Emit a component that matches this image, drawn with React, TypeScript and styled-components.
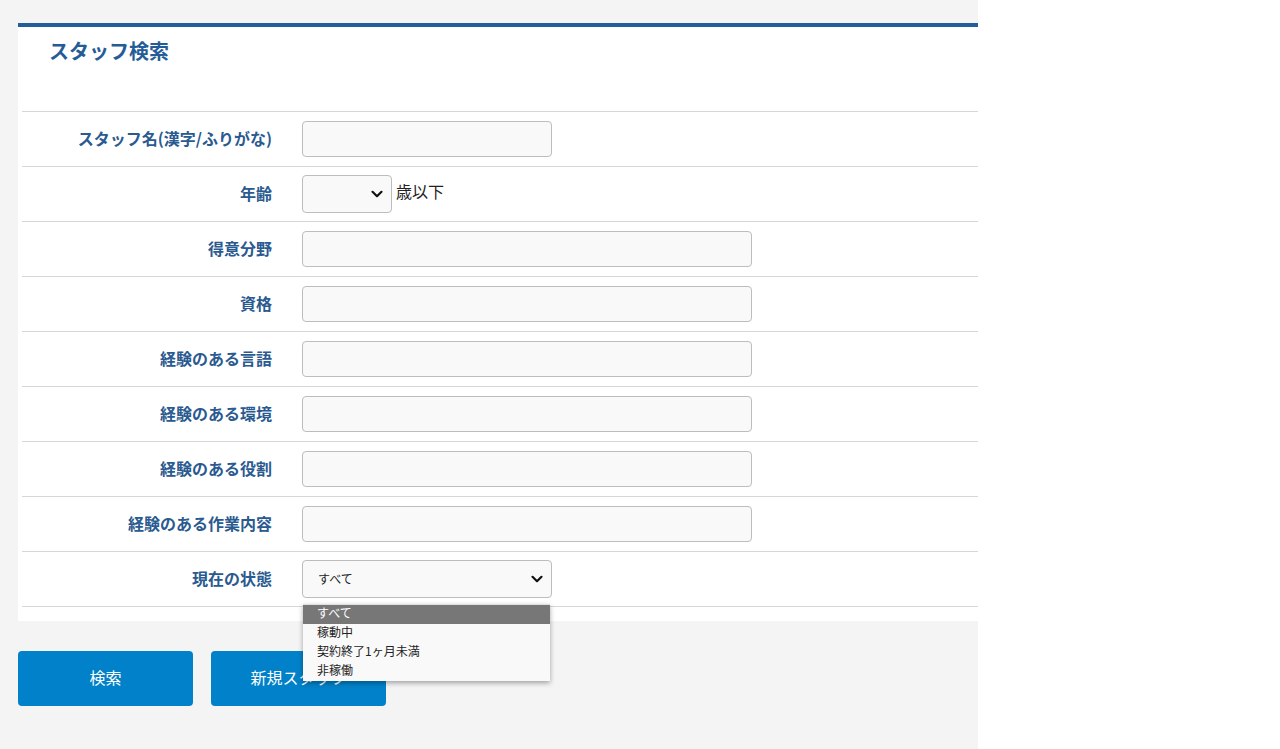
import styled, { createGlobalStyle } from "styled-components";

const GlobalStyle = createGlobalStyle`
  html, body {
    margin: 0;
    padding: 0;
    background: #ffffff;
  }
  body {
    font-family: "Noto Sans CJK JP", "Noto Sans", sans-serif;
    color: #222;
  }
`;

const Page = styled.div`
  width: 978px;
  min-height: 749px;
  background: #f4f4f4;
  padding: 23px 0 0 18px;
  box-sizing: border-box;
`;

const Card = styled.section`
  background: #fff;
  border-top: 4px solid #235d9b;
  padding: 0 0 14px 4px;
`;

const Title = styled.h2`
  margin: 0;
  padding: 9px 0 45px 27px;
  font-size: 20px;
  line-height: 30px;
  font-weight: 700;
  color: #245c98;
`;

const Table = styled.div`
  border-top: 1px solid #d6d6d6;
`;

const Row = styled.div`
  display: grid;
  grid-template-columns: 280px 1fr;
  align-items: center;
  height: 54px;
  border-bottom: 1px solid #d6d6d6;
`;

const Label = styled.div`
  text-align: right;
  padding: 0 30px 2px 0;
  font-size: 16px;
  line-height: 22px;
  font-weight: 700;
  color: #2a5a8f;
`;

const Field = styled.div`
  display: flex;
  align-items: center;
  gap: 4px;
`;

const TextInput = styled.input<{ $w: number }>`
  width: ${(p) => p.$w}px;
  height: 36px;
  box-sizing: border-box;
  border: 1px solid #bdbdbd;
  border-radius: 4px;
  background: #f9f9f9;
  font-family: inherit;
  font-size: 14px;
  padding: 0 10px;
`;

const SelectWrap = styled.div<{ $w: number }>`
  position: relative;
  width: ${(p) => p.$w}px;
`;

const Select = styled.select`
  width: 100%;
  height: 38px;
  box-sizing: border-box;
  appearance: none;
  border: 1px solid #bdbdbd;
  border-radius: 4px;
  background: #f9f9f9;
  font-family: inherit;
  font-size: 12px;
  color: #222;
  padding: 0 0 2px 15px;
`;

const Chevron = styled.svg`
  position: absolute;
  right: 8px;
  top: 50%;
  transform: translateY(-50%);
  pointer-events: none;
`;

const Suffix = styled.span`
  font-size: 16px;
  line-height: 22px;
  color: #222;
  padding-bottom: 6px;
`;

const Dropdown = styled.ul`
  position: absolute;
  left: 1px;
  top: 44px;
  width: 247px;
  margin: 0;
  padding: 0;
  list-style: none;
  background: #f9f9f9;
  box-shadow: 0 2px 5px rgba(0, 0, 0, 0.35);
  border-top: 1px solid #e0e0e0;
  z-index: 10;
`;

const Option = styled.li<{ $active?: boolean }>`
  height: 19px;
  box-sizing: border-box;
  line-height: 16px;
  padding: 0 0 3px 14px;
  font-size: 12px;
  color: ${(p) => (p.$active ? "#fff" : "#222")};
  background: ${(p) => (p.$active ? "#777777" : "transparent")};
`;

const Actions = styled.div`
  display: flex;
  gap: 18px;
  padding-top: 30px;
`;

const Button = styled.button`
  width: 175px;
  height: 55px;
  border: none;
  border-radius: 4px;
  background: #0081c9;
  color: #fff;
  font-family: inherit;
  font-size: 16px;
  padding: 0 0 4px;
  cursor: pointer;
`;

const ChevronIcon = () => (
  <Chevron width="14" height="14" viewBox="0 0 14 14">
    <path
      d="M2.5 4.8 L7 9.2 L11.5 4.8"
      fill="none"
      stroke="#111"
      strokeWidth="2.2"
      strokeLinecap="round"
      strokeLinejoin="round"
    />
  </Chevron>
);

const textRows = [
  "得意分野",
  "資格",
  "経験のある言語",
  "経験のある環境",
  "経験のある役割",
  "経験のある作業内容",
];

const statusOptions = ["すべて", "稼動中", "契約終了1ヶ月未満", "非稼働"];

export default function App() {
  return (
    <>
      <GlobalStyle />
      <Page>
        <Card>
          <Title>スタッフ検索</Title>
          <Table>
            <Row>
              <Label>スタッフ名(漢字/ふりがな)</Label>
              <Field>
                <TextInput $w={250} />
              </Field>
            </Row>
            <Row>
              <Label>年齢</Label>
              <Field>
                <SelectWrap $w={90}>
                  <Select defaultValue="">
                    <option value=""></option>
                  </Select>
                  <ChevronIcon />
                </SelectWrap>
                <Suffix>歳以下</Suffix>
              </Field>
            </Row>
            {textRows.map((label) => (
              <Row key={label}>
                <Label>{label}</Label>
                <Field>
                  <TextInput $w={450} />
                </Field>
              </Row>
            ))}
            <Row>
              <Label>現在の状態</Label>
              <Field>
                <SelectWrap $w={250}>
                  <Select defaultValue="すべて">
                    {statusOptions.map((o) => (
                      <option key={o}>{o}</option>
                    ))}
                  </Select>
                  <ChevronIcon />
                  <Dropdown>
                    {statusOptions.map((o, i) => (
                      <Option key={o} $active={i === 0}>
                        {o}
                      </Option>
                    ))}
                  </Dropdown>
                </SelectWrap>
              </Field>
            </Row>
          </Table>
        </Card>
        <Actions>
          <Button>検索</Button>
          <Button>新規スタッフ</Button>
        </Actions>
      </Page>
    </>
  );
}
